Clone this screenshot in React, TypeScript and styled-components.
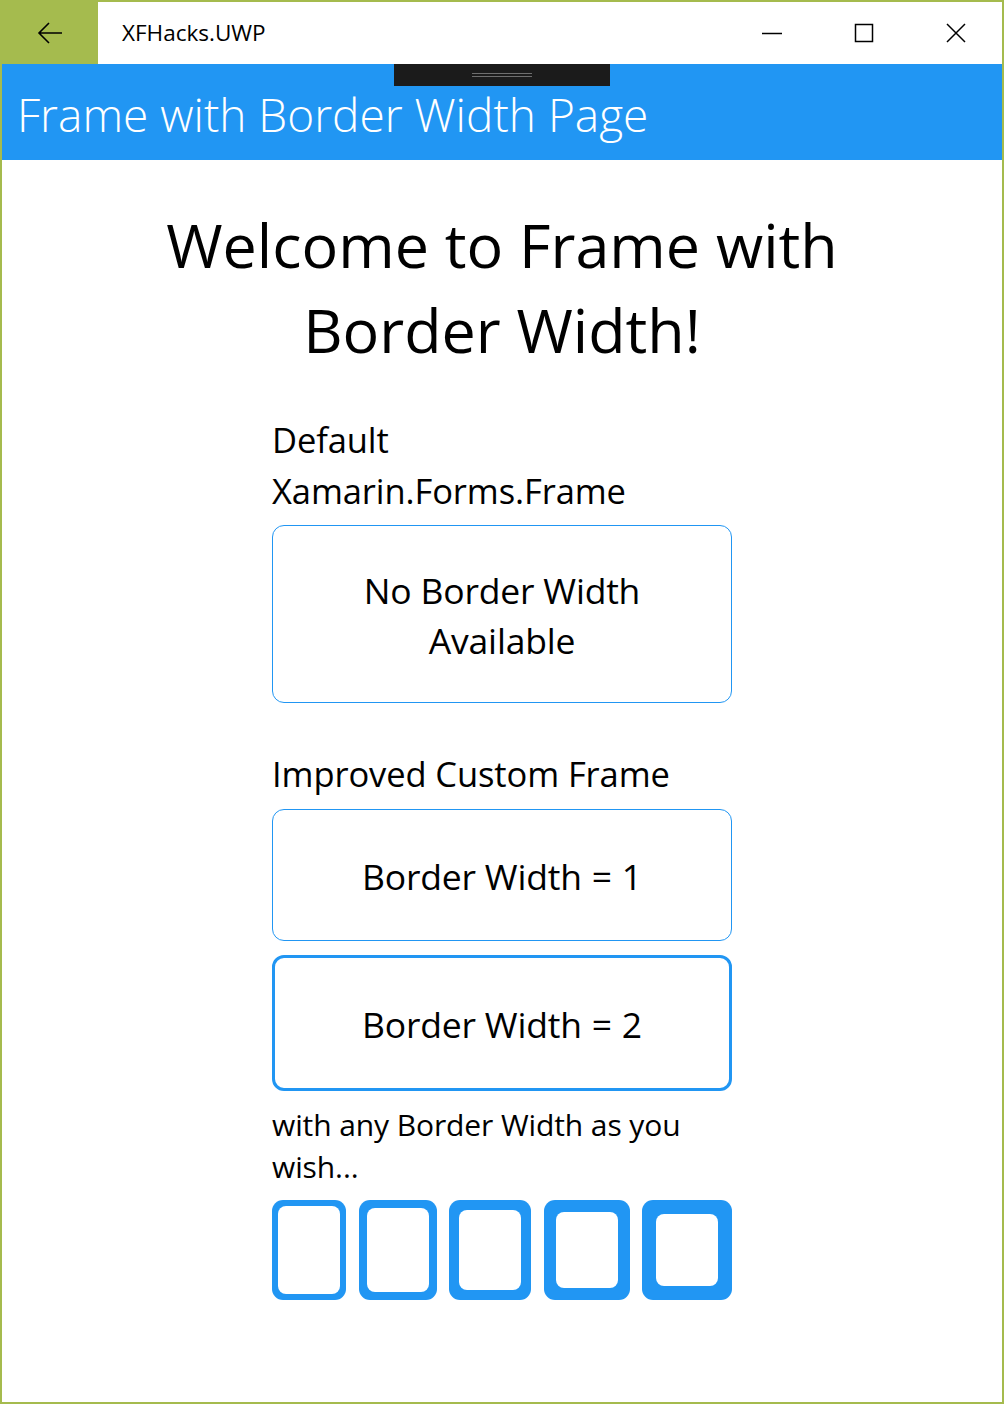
import React from "react";
import styled, { createGlobalStyle } from "styled-components";

const GREEN = "#a5bb4e";
const BLUE = "#2196f3";
const FONT = `"Open Sans", "Noto Sans", sans-serif`;

const GlobalStyle = createGlobalStyle`
  html, body { margin: 0; padding: 0; background: #ffffff; }
  * { box-sizing: border-box; }
  body { font-family: ${FONT}; color: #000; }
`;

const Window = styled.div`
  width: 1004px;
  height: 1404px;
  border: 2px solid ${GREEN};
  display: flex;
  flex-direction: column;
  background: #fff;
  overflow: hidden;
`;

const TitleBar = styled.div`
  height: 62px;
  display: flex;
  align-items: stretch;
  background: #fff;
  flex-shrink: 0;
`;

const BackButton = styled.div`
  width: 96px;
  background: ${GREEN};
  display: flex;
  align-items: center;
  justify-content: center;
`;

const AppTitle = styled.div`
  margin-left: 24px;
  align-self: center;
  font-size: 22.5px;
  font-family: ${FONT};
  color: #000;
  flex: 1;
  padding-bottom: 2px;
`;

const CaptionButton = styled.div`
  width: 92px;
  display: flex;
  align-items: center;
  justify-content: center;
`;

const Header = styled.div`
  position: relative;
  height: 96px;
  background: ${BLUE};
  display: flex;
  align-items: center;
  padding-left: 15px;
  flex-shrink: 0;
`;

const HeaderTitle = styled.h1`
  margin: 4px 0 0 0;
  font-family: ${FONT};
  font-weight: 300;
  font-size: 46px;
  color: #fff;
`;

const DragHandle = styled.div`
  position: absolute;
  top: 0;
  left: 392px;
  width: 216px;
  height: 22px;
  background: #1b1b1b;
  display: flex;
  flex-direction: column;
  align-items: center;
  justify-content: center;
  gap: 2px;
`;

const HandleLine = styled.div`
  width: 60px;
  height: 1px;
  background: #6e6e6e;
`;

const Content = styled.div`
  flex: 1;
  display: flex;
  flex-direction: column;
  align-items: center;
  padding-top: 42px;
`;

const Welcome = styled.h2`
  margin: 0;
  font-family: ${FONT};
  font-weight: 400;
  font-size: 61px;
  line-height: 85px;
  text-align: center;
  width: 720px;
`;

const Column = styled.div`
  width: 460px;
  display: flex;
  flex-direction: column;
`;

const Label = styled.div<{ $top: number }>`
  margin-top: ${(p) => p.$top}px;
  font-size: 34.5px;
  line-height: 51px;
  letter-spacing: -0.1px;
`;

const Frame = styled.div<{ $bw: number; $h: number; $top: number }>`
  margin-top: ${(p) => p.$top}px;
  height: ${(p) => p.$h}px;
  border: ${(p) => p.$bw}px solid ${BLUE};
  border-radius: 12px;
  display: flex;
  align-items: center;
  justify-content: center;
  text-align: center;
  font-size: 35.5px;
  line-height: 50px;
  letter-spacing: -0.2px;
  padding-top: 2px;
`;

const Eq = styled.span`
  margin: 0 1px;
`;

const Note = styled.div`
  margin-top: 13px;
  font-size: 30px;
  line-height: 42px;
  letter-spacing: -0.1px;
`;

const SwatchRow = styled.div`
  margin-top: 12px;
  display: flex;
  justify-content: space-between;
  height: 100px;
`;

const Swatch = styled.div<{ $bw: number }>`
  background: ${BLUE};
  border-radius: 11px;
  padding: ${(p) => p.$bw}px;
  display: flex;
`;

const SwatchInner = styled.div`
  width: 62px;
  background: #fff;
  border-radius: 8px;
`;

const BackArrow = () => (
  <svg width="26" height="22" viewBox="0 0 26 22">
    <path d="M25 11H2M12 1L2 11l10 10" fill="none" stroke="#000" strokeWidth="1.6" />
  </svg>
);

const MinIcon = () => (
  <svg width="20" height="20" viewBox="0 0 20 20">
    <path d="M0 10.5h20" stroke="#000" strokeWidth="1.5" />
  </svg>
);

const MaxIcon = () => (
  <svg width="20" height="20" viewBox="0 0 20 20">
    <rect x="1.5" y="1.5" width="17" height="17" fill="none" stroke="#000" strokeWidth="1.5" />
  </svg>
);

const CloseIcon = () => (
  <svg width="20" height="20" viewBox="0 0 20 20">
    <path d="M1 1l18 18M19 1L1 19" stroke="#000" strokeWidth="1.5" />
  </svg>
);

export default function App() {
  return (
    <>
      <GlobalStyle />
      <Window>
        <TitleBar>
          <BackButton>
            <BackArrow />
          </BackButton>
          <AppTitle>XFHacks.UWP</AppTitle>
          <CaptionButton>
            <MinIcon />
          </CaptionButton>
          <CaptionButton>
            <MaxIcon />
          </CaptionButton>
          <CaptionButton>
            <CloseIcon />
          </CaptionButton>
        </TitleBar>
        <Header>
          <DragHandle>
            <HandleLine />
            <HandleLine />
          </DragHandle>
          <HeaderTitle>Frame with Border Width Page</HeaderTitle>
        </Header>
        <Content>
          <Welcome>
            Welcome to Frame with
            <br />
            Border Width!
          </Welcome>
          <Column>
            <Label $top={42}>
              Default
              <br />
              Xamarin.Forms.Frame
            </Label>
            <Frame $bw={1.5} $h={178} $top={9}>
              No Border Width
              <br />
              Available
            </Frame>
            <Label $top={45}>Improved Custom Frame</Label>
            <Frame $bw={1.5} $h={132} $top={10}>
              <span>
                Border Width <Eq>=</Eq> 1
              </span>
            </Frame>
            <Frame $bw={3} $h={136} $top={14}>
              <span>
                Border Width <Eq>=</Eq> 2
              </span>
            </Frame>
            <Note>
              with any Border Width as you
              <br />
              wish...
            </Note>
            <SwatchRow>
              {[6, 8, 10, 12, 14].map((bw) => (
                <Swatch key={bw} $bw={bw}>
                  <SwatchInner />
                </Swatch>
              ))}
            </SwatchRow>
          </Column>
        </Content>
      </Window>
    </>
  );
}
